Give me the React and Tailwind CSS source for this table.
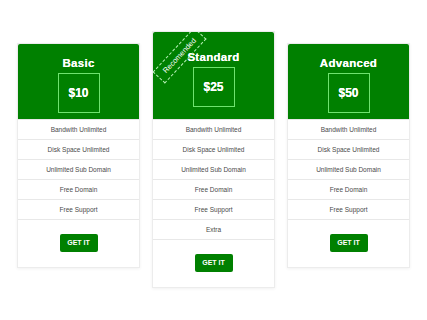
import React from 'react';

const plans = [
  { name: 'Basic', price: '$10', features: ['Bandwith Unlimited', 'Disk Space Unlimited', 'Unlimited Sub Domain', 'Free Domain', 'Free Support'] },
  { name: 'Standard', price: '$25', featured: true, features: ['Bandwith Unlimited', 'Disk Space Unlimited', 'Unlimited Sub Domain', 'Free Domain', 'Free Support', 'Extra'] },
  { name: 'Advanced', price: '$50', features: ['Bandwith Unlimited', 'Disk Space Unlimited', 'Unlimited Sub Domain', 'Free Domain', 'Free Support'] },
];

function PlanCard({ plan }) {
  return (
    <div className={`relative w-[123px] bg-white border border-[#ececec] shadow-[0_1px_3px_rgba(0,0,0,0.06)] overflow-hidden ${plan.featured ? '' : 'mt-3'}`}>
      <div className={`bg-[#008000] flex flex-col items-center rounded-t-[2px] ${plan.featured ? 'pt-[16px] pb-[12px]' : 'pt-[10px] pb-[6px]'}`}>
        <div className="text-[11.5px] font-bold leading-[18px] text-white tracking-[0.3px] [text-shadow:0_0_0.6px_#fff]">{plan.name}</div>
        <div className="mt-px w-[42px] h-[40px] border border-[#6fe36f] flex items-center justify-center">
          <span className="text-[12px] font-bold text-white [text-shadow:0_0_0.5px_#fff]">{plan.price}</span>
        </div>
      </div>
      {plan.featured && (
        <div className="absolute left-[-4px] top-[15px] w-[61px] h-[17px] border border-dashed border-[#b8f0b8] -rotate-[47deg] flex items-center justify-center">
          <span className="text-[7.5px] text-white leading-none">Recomended</span>
        </div>
      )}
      {plan.features.map((f) => (
        <div key={f} className="h-[20px] border-t border-[#e8e8e8] flex items-center justify-center text-[6.5px] text-[#4a4a4a]">
          {f}
        </div>
      ))}
      <div className="border-t border-[#e8e8e8] flex justify-center pt-[14px] pb-[15px]">
        <button className="w-[38px] h-[18px] rounded-[2px] bg-[#008000] text-white text-[7px] font-bold">GET IT</button>
      </div>
    </div>
  );
}

export default function App() {
  return (
    <div className="w-[427px] h-[320px] bg-white flex justify-center items-start gap-3 pt-[31px] font-['Liberation_Sans',Arial,sans-serif]">
      {plans.map((p) => (
        <PlanCard key={p.name} plan={p} />
      ))}
    </div>
  );
}
